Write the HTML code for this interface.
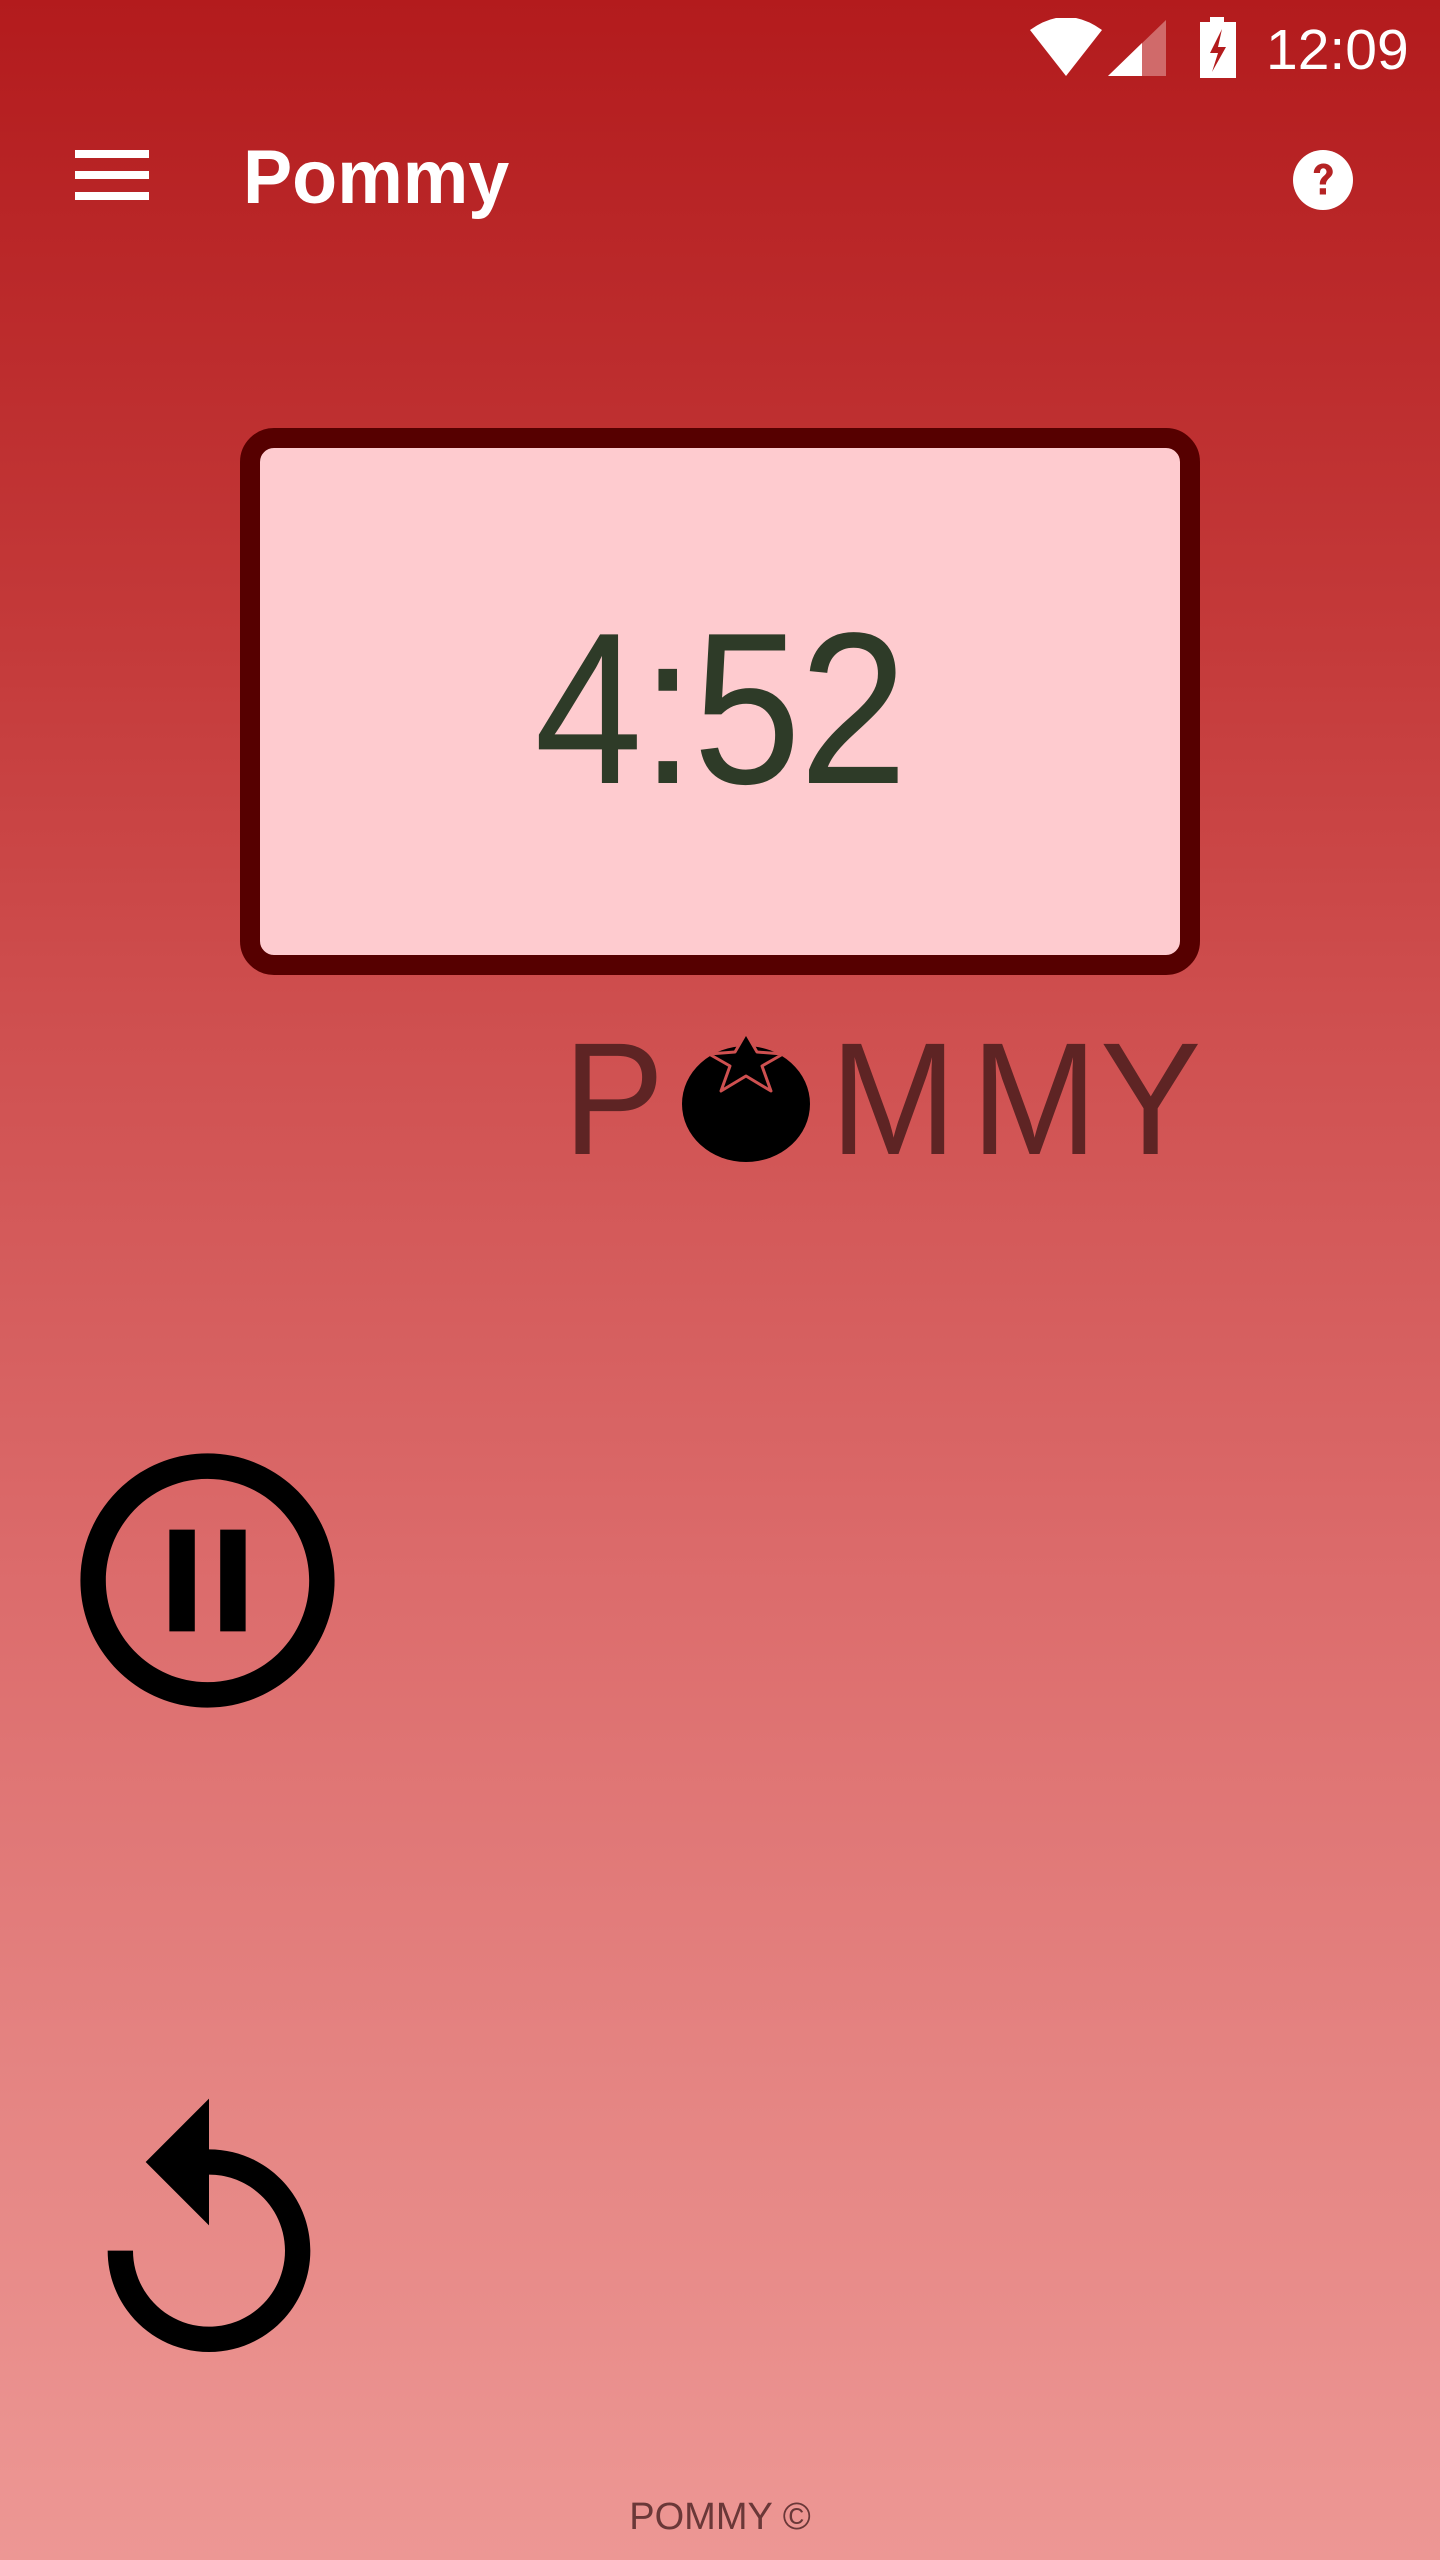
<!DOCTYPE html>
<html><head><meta charset="utf-8"><style>
html,body{margin:0;padding:0}
body{width:1440px;height:2560px;position:relative;overflow:hidden;background:linear-gradient(to bottom,#b31b1d 0%,#c43a3a 25%,#d05252 42%,#dc6c6c 62%,#e58583 82%,#ed9794 100%);font-family:"Liberation Sans",sans-serif}
.abs{position:absolute}
.time{left:1266px;top:14px;color:#fff;font-size:57px;line-height:72px}
.title{left:243px;top:128px;color:#fff;font-size:76px;font-weight:bold;line-height:100px;transform:scaleX(0.97);transform-origin:left}
.box{left:240px;top:428px;width:920px;height:507px;border:20px solid #560000;border-radius:34px;background:#fecbcf}
.digits{left:0;width:100%;top:583px;text-align:center;font-size:216px;color:#2e3b28;line-height:250px;transform:scaleX(0.9);letter-spacing:-2px}
.logo{font-size:160px;color:#5e2424;line-height:162px;top:1018px;transform:scaleX(0.95);transform-origin:left}
.foot{left:0;width:100%;top:2496px;text-align:center;font-size:38px;color:#6a3838}
</style></head><body>
<svg class="abs" style="left:1028px;top:18px" width="80" height="60" viewBox="0 0 80 60"><path d="M2 12 Q38 -14 74 12 L38 58 Z" fill="#fff"/></svg>
<svg class="abs" style="left:1108px;top:18px" width="60" height="60" viewBox="0 0 60 60"><path d="M0 58 L58 2 L58 58 Z" fill="#d06a6a"/><path d="M0 58 L34 25 L34 58 Z" fill="#fff"/></svg>
<svg class="abs" style="left:1198px;top:17px" width="40" height="62" viewBox="0 0 40 62"><rect x="12" y="0" width="14" height="6" fill="#fff"/><rect x="2" y="5" width="36" height="56" fill="#fff"/><path d="M24 12 L12 36 L20 36 L14 55 L28 30 L20 30 Z" fill="#b31b1d"/></svg>
<div class="abs time">12:09</div>
<div class="abs" style="left:75px;top:150px;width:74px;height:8px;background:#fff"></div>
<div class="abs" style="left:75px;top:171px;width:74px;height:8px;background:#fff"></div>
<div class="abs" style="left:75px;top:192px;width:74px;height:8px;background:#fff"></div>
<div class="abs title">Pommy</div>
<svg class="abs" style="left:1293px;top:150px" width="60" height="60" viewBox="0 0 24 24"><circle cx="12" cy="12" r="12" fill="#fff"/><path d="M8.3 9.2C8.3 7 10 5.4 12.2 5.4c2.2 0 3.7 1.5 3.7 3.3 0 2.4-2.7 2.6-2.7 5.1h-2.5c0-3.3 2.7-3.4 2.7-5.1 0-0.8-0.6-1.4-1.3-1.4-0.8 0-1.3 0.7-1.3 1.9z M10.7 15.3h2.5v2.5h-2.5z" fill="#b52324"/></svg>
<div class="abs box"></div>
<div class="abs digits">4:52</div>
<div class="abs logo" style="left:563px">P</div>
<svg class="abs" style="left:680px;top:1032px" width="132" height="132" viewBox="0 0 132 132"><ellipse cx="66" cy="72" rx="64" ry="58" fill="#000"/><path d="M66 1 L77 20 L103 22 L82 34 L91 59 L66 44 L41 59 L50 34 L29 22 L55 20 Z" fill="#000" stroke="#cf5050" stroke-width="3" stroke-linejoin="round"/></svg>
<div class="abs logo" style="left:830px">M</div>
<div class="abs logo" style="left:971px">M</div>
<div class="abs logo" style="left:1100px">Y</div>
<svg class="abs" style="left:55px;top:1428px" width="305" height="305" viewBox="0 0 24 24"><path d="M9 16h2V8H9v8zm3-14C6.48 2 2 6.48 2 12s4.48 10 10 10 10-4.48 10-10S17.52 2 12 2zm0 18c-4.41 0-8-3.59-8-8s3.590-8 8-8 8 3.59 8 8-3.59 8-8 8zm1-4h2V8h-2v8z" fill="#000"/></svg>
<svg class="abs" style="left:57px;top:2086px" width="304" height="304" viewBox="0 0 24 24"><path d="M12 5V1L7 6l5 5V7c3.31 0 6 2.69 6 6s-2.69 6-6 6-6-2.69-6-6H4c0 4.42 3.58 8 8 8s8-3.58 8-8-3.58-8-8-8z" fill="#000"/></svg>
<div class="abs foot">POMMY ©</div>
</body></html>
